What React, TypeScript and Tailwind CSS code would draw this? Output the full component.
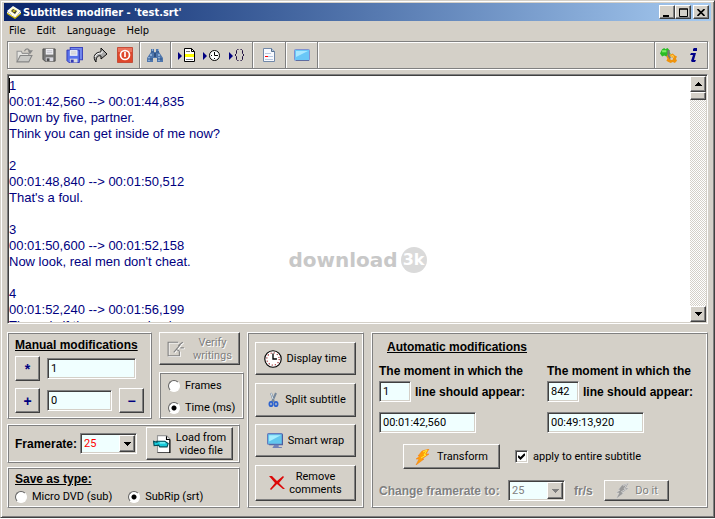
import type { ReactNode } from "react"
import clsx from "clsx"

const raised =
  "border border-t-white border-l-white border-r-[#404040] border-b-[#404040] bg-[#d4d0c8] shadow-[inset_-1px_-1px_#808080]"
const sunken =
  "border border-t-[#808080] border-l-[#808080] border-r-white border-b-white shadow-[inset_1px_1px_#404040,inset_-1px_-1px_#d4d0c8]"
const panel =
  "border border-t-white border-l-white border-r-[#808080] border-b-[#808080] shadow-[inset_1px_1px_#808080,inset_-1px_-1px_#fff]"
const uiFont = "font-['Roboto','Liberation_Sans',sans-serif] text-[11px] leading-[13px] whitespace-nowrap"
const boldFont = "font-['Liberation_Sans',sans-serif] text-[12px] leading-[14px] font-bold whitespace-nowrap"
const disabledText = "text-[#808080] [text-shadow:1px_1px_#fff]"

const subtitles = `1
00:01:42,560 --> 00:01:44,835
Down by five, partner.
Think you can get inside of me now?

2
00:01:48,840 --> 00:01:50,512
That's a foul.

3
00:01:50,600 --> 00:01:52,158
Now look, real men don't cheat.

4
00:01:52,240 --> 00:01:56,199
The only if they are coming in`

function Icon({ size = 16, children }: { size?: number; children: ReactNode }) {
  return (
    <svg width={size} height={size} viewBox="0 0 16 16" className="shrink-0" aria-hidden="true">
      {children}
    </svg>
  )
}

const AppIcon = () => (
  <Icon>
    <path d="M1 7 7 2l8 5-6 6z" fill="#fff" />
    <path d="m3 7 4-4 6 4-4 4z" fill="#fffbc0" />
    <path d="m5 7 2-2 4 2-2 3z" fill="#333" />
    <path d="m6 7 2-1 2 1-2 1z" fill="#e9da19" />
    <path d="m1 8 8 5 6-5v2l-6 5-8-5z" fill="#c8b400" />
    <path d="m1 8 8 5 6-5" fill="none" stroke="#fff" />
  </Icon>
)

const OpenIcon = () => (
  <Icon size={17}>
    <path d="M1 14V4h4l1 2h6v3" fill="#e5e5e2" stroke="#959595" />
    <path d="m1 14 3-6h11l-3 6z" fill="#c9c9c6" stroke="#858585" />
    <path d="M8 4c1-3 4-3 5 0" fill="none" stroke="#888" />
    <path d="M11 3h5l-3 4z" fill="#888" />
  </Icon>
)

const Disk = ({ body, edge }: { body: string; edge: string }) => (
  <>
    <path d="M1 1h13v13H3l-2-2z" fill={body} stroke={edge} />
    <path d="M4 1h8v6H4z" fill="#f4f4f8" />
    <path d="M5 3h6M5 5h6" stroke="#bcbcc4" />
    <path d="M4 10h8v4H4z" fill="#d9d9e0" />
    <path d="M5 11h3v3H5z" fill={edge} />
  </>
)

const SaveIcon = () => (
  <Icon size={15}>
    <Disk body="#777" edge="#4d4d4d" />
  </Icon>
)

const SaveAllIcon = () => (
  <Icon size={17}>
    <path d="M4 .5h11.5V12H4z" fill="#7288ed" stroke="#3d45bd" />
    <g transform="translate(0 2) scale(.9)">
      <Disk body="#5871ec" edge="#343ab5" />
    </g>
  </Icon>
)

const RedoIcon = () => (
  <Icon>
    <path d="M4 15C0 10 3 5 9 5V1l6 6-6 5V9C6 8 4 10 4 15z" fill="#a9a9a9" stroke="#111" />
    <path d="M3 10c1-3 3-4 7-4V4" fill="none" stroke="#fff" />
  </Icon>
)

const PowerIcon = () => (
  <Icon>
    <path d="M.5.5h15v15H.5z" fill="#df472c" stroke="#c54d39" />
    <path d="M1 1h14v4H1z" fill="#ed725b" />
    <circle cx="8" cy="8" r="4.500" fill="none" stroke="#fff" strokeWidth="1.700" />
    <path d="M8 5v5" stroke="#fff" strokeWidth="1.700" />
  </Icon>
)

const BinocularsIcon = () => (
  <Icon>
    <path d="M4 2h3v3h2V2h3v3l2 3 2 3v4h-6v-4H6v4H0v-4l2-3 2-3z" fill="#4f76ac" />
    <path d="M5 3h1M11 3h1M3 8h2M11 8h2M2 10v4M12 10v4" stroke="#c5e2ff" />
    <path d="M7 6h2v4H7z" fill="#30507f" />
    <path d="M4 5h3M9 5h3M1 12h5M10 12h5" stroke="#2d5288" />
  </Icon>
)

const Marker = () => <path d="m0 5 4 4-4 4z" fill="#000080" />

const LineIcon = () => (
  <svg width="18" height="16" viewBox="0 0 18 16" className="shrink-0" aria-hidden="true">
    <Marker />
    <path d="M6.500 1.500h7l3 3v10h-10z" fill="#fff" stroke="#000" />
    <path d="M13.500 1.500v3h3" stroke="#000" fill="none" />
    <path d="M8 4.500h4M8 12.500h7" stroke="#777" />
    <path d="M7 7h9v3H7z" fill="#ff0" />
  </svg>
)

const TimeIcon = () => (
  <svg width="18" height="16" viewBox="0 0 18 16" className="shrink-0" aria-hidden="true">
    <Marker />
    <circle cx="11.500" cy="8.500" r="5" fill="#fff" stroke="#000" />
    <path d="M11.500 5v3.500H15M8 8.500h1M11.500 11v1" stroke="#000" fill="none" />
  </svg>
)

const BracesIcon = () => (
  <svg width="16" height="16" viewBox="0 0 16 16" className="shrink-0" aria-hidden="true">
    <Marker />
    <path
      d="M9.500 2.500h-1l-1 1v3l-1.500 1.500 1.500 1.500v3l1 1h1M11.500 2.500h1l1 1v3l1.500 1.500-1.500 1.500v3l-1 1h-1"
      fill="none"
      stroke="#201040"
    />
  </svg>
)

const DocumentIcon = () => (
  <Icon>
    <path d="M2.500 1.500h8l3 3v10h-11z" fill="#f8faff" stroke="#7188a8" />
    <path d="M10.500 1.500v3h3" fill="#b7cbe5" stroke="#57718f" />
    <path d="M4 6.500h6M7 9.500h5M4 12.500h8" stroke="#b9c8e0" />
    <path d="M4 9h3v1H4z" fill="#f00" />
  </Icon>
)

const ScreenIcon = () => (
  <Icon>
    <rect x=".5" y="2.500" width="15" height="11" rx="1" fill="#69c7f7" stroke="#8290cf" />
    <path d="M2 4h12L2 10z" fill="#a9e8ff" />
    <path d="M2 13.500h13" stroke="#606da0" />
  </Icon>
)

const GearsIcon = () => (
  <Icon size={17}>
    <path d="m2 2 2-1 1 1 2-1 2 2v2l1 1-2 2-2 1-2-1-2 1-2-3 1-2z" fill="#29bc25" />
    <path d="M2 3h4v2H2z" fill="#79ee61" />
    <path d="m7 7 2-1 1 1 2-1 2 2 2 1-1 2 1 2-2 2-2-1-2 1-2-1-2-1 1-2-1-2z" fill="#ef930c" />
    <path d="m8 8 2 1 2-1 1 2" fill="none" stroke="#ffd153" />
    <path d="M8 3v5l2 3" fill="none" stroke="#777" strokeWidth="2" />
    <circle cx="11" cy="11" r="1.300" fill="#d4d0c8" />
  </Icon>
)

const InfoIcon = () => (
  <Icon>
    <path d="M8 1h3v3H7V2zM5 6h5l-2 7h2l-1 2H6l-1-1 2-6H4z" fill="#000088" />
  </Icon>
)

const VerifyIcon = () => (
  <Icon size={18}>
    <g transform="translate(.7 .7)" fill="none" stroke="#fff">
      <path d="M10 2H1v12h10v-4M6 11l6-7M8 8l3 2M10 5l4-3M12 7h3" />
    </g>
    <path d="M10 2H1v12h10v-4M6 11l6-7M8 8l3 2M10 5l4-3M12 7h3" fill="none" stroke="#808080" />
  </Icon>
)

const VideoIcon = () => (
  <Icon size={18}>
    <path d="M5 .5h7l3 3v12H4V.5z" fill="#fff" stroke="#999" />
    <path d="M12 1v3h3M15 4v12H4" fill="none" stroke="#000" />
    <path d="m.5 5.500 3 1V5.500h7l3 2-1 3H6l-1-1.500-4 .5z" fill="#16cada" stroke="#004b57" />
    <path d="M6 7h5" stroke="#a4ffff" />
  </Icon>
)

const ClockIcon = () => (
  <Icon size={18}>
    <circle cx="8" cy="8" r="7.300" fill="#fff" stroke="#000" />
    <circle cx="8" cy="8" r="5.500" fill="none" stroke="#a02020" strokeDasharray="1 1.880" />
    <path d="M8 3v5h3.500" fill="none" stroke="#000" strokeWidth="1.200" />
  </Icon>
)

const ScissorsIcon = () => (
  <Icon>
    <path d="m6 1 3 9M11 1 7 10" stroke="#75879b" strokeWidth="2" />
    <path d="m6 1 2 6" stroke="#d4e0ec" />
    <g fill="none" stroke="#2e63ce" strokeWidth="1.800">
      <ellipse cx="6" cy="12" rx="1.600" ry="2.200" />
      <ellipse cx="11" cy="12" rx="1.600" ry="2.200" />
    </g>
  </Icon>
)

const MonitorIcon = () => (
  <Icon size={17}>
    <rect x=".5" y="1.500" width="14" height="10" rx="1" fill="#62c6ed" stroke="#6679bb" />
    <path d="M2 3h11L2 9z" fill="#a5eeff" />
    <path d="M14.500 2v10H2" fill="none" stroke="#495b9d" />
    <path d="M7 12h4v2h3v1H5z" fill="#7181b7" />
  </Icon>
)

const CrossIcon = () => (
  <Icon>
    <path d="m0 1 3 0 5 5 6-5 1 1-5 6 6 6-2 0-6-5-6 6-1-1 5-6z" fill="#dc0808" />
  </Icon>
)

const BoltIcon = ({ gray = false }: { gray?: boolean }) => (
  <Icon>
    <path
      d="m7 2 7-2-3 5h3L7 10h2L1 16l3-6H1l4-3H3z"
      fill={gray ? "#999" : "#ff9e08"}
      stroke={gray ? "#ddd" : "#f47b0c"}
      strokeWidth=".5"
    />
    <path d="m8 3 4-2-3 5 2 0-5 3" fill="none" stroke={gray ? "#ccc" : "#ffed2f"} />
  </Icon>
)

function Arrow({ up = false, gray = false }: { up?: boolean; gray?: boolean }) {
  return (
    <svg width="7" height="4" viewBox="0 0 7 4" shapeRendering="crispEdges" aria-hidden="true">
      <path d={up ? "M3 0h1v1h1v1h1v1h1v1H0V3h1V2h1V1h1z" : "M0 0h7v1H6v1H5v1H4v1H3V3H2V2H1V1H0z"} fill={gray ? "#808080" : "#000"} />
    </svg>
  )
}

function ToolButton({ label, children }: { label: string; children: ReactNode }) {
  return (
    <button aria-label={label} title={label} className="flex h-6 w-[25px] items-center justify-center">
      {children}
    </button>
  )
}

function ToolGroup({ className, children }: { className?: string; children?: ReactNode }) {
  return (
    <div
      className={clsx(
        "flex items-center border-l border-[#808080] shadow-[inset_1px_0_#fff] first:border-l-0",
        className
      )}>
      {children}
    </div>
  )
}

function PushButton({ className, children, disabled }: { className: string; children: ReactNode; disabled?: boolean }) {
  return (
    <button disabled={disabled} className={clsx(raised, uiFont, "flex items-center justify-center", disabled && disabledText, className)}>
      {children}
    </button>
  )
}

function Field({ label, value, className }: { label: string; value: string; className: string }) {
  return (
    <input aria-label={label} defaultValue={value} className={clsx(sunken, uiFont, "h-[21px] min-w-0 bg-[#f0ffff] px-[3px] pb-px", className)} />
  )
}

function Radio({ name, label, checked }: { name: string; label: string; checked?: boolean }) {
  return (
    <label className={clsx(uiFont, "flex items-center gap-[5px]")}>
      <input
        type="radio"
        name={name}
        defaultChecked={checked}
        className="size-3 shrink-0 appearance-none rounded-full border border-t-[#606060] border-l-[#606060] border-r-white border-b-white bg-white checked:bg-[radial-gradient(circle,#000_2px,#fff_3px)]"
      />
      {label}
    </label>
  )
}

function RateSelect({ label, disabled, className }: { label: string; disabled?: boolean; className: string }) {
  return (
    <div className="relative">
      <select
        aria-label={label}
        disabled={disabled}
        className={clsx(sunken, uiFont, "block h-[21px] appearance-none bg-[#f0ffff] pl-[3px] opacity-100", className)}>
        <option>25</option>
      </select>
      <span className={clsx(raised, "pointer-events-none absolute inset-y-[2px] right-[2px] flex w-4 items-center justify-center")}>
        <Arrow gray={disabled} />
      </span>
    </div>
  )
}

function TitleBar() {
  const control = clsx(raised, "flex h-[14px] w-4 items-center justify-center")
  return (
    <header className="flex h-[18px] items-center bg-linear-to-r from-[#0a246a] to-[#a6caf0] pr-[2px] pl-[2px]">
      <AppIcon />
      <h1 className="ml-px flex-1 pt-px font-['DejaVu_Sans_Condensed','DejaVu_Sans',sans-serif] text-[11px] leading-[14px] font-bold text-white">
        Subtitles modifier - 'test.srt'
      </h1>
      <button aria-label="Minimize" className={control}>
        <svg width="10" height="9"><path d="M1 7h6v2H1z" /></svg>
      </button>
      <button aria-label="Maximize" className={control}>
        <svg width="9" height="9"><path d="M.5 1h8v7.500h-8zM0 1h9" fill="none" stroke="#000" /></svg>
      </button>
      <button aria-label="Close" className={clsx(control, "ml-[2px]")}>
        <svg width="8" height="7"><path d="m.5 0 7 7m0-7-7 7" stroke="#000" strokeWidth="1.600" /></svg>
      </button>
    </header>
  )
}

function Toolbar() {
  return (
    <div className="mx-[3px] flex h-7 border border-[#808080] shadow-[inset_1px_1px_#fff,1px_1px_#fff]">
      <ToolGroup className="w-[131px] pl-1">
        <ToolButton label="Open"><OpenIcon /></ToolButton>
        <ToolButton label="Save"><SaveIcon /></ToolButton>
        <ToolButton label="Save all"><SaveAllIcon /></ToolButton>
        <ToolButton label="Reload"><RedoIcon /></ToolButton>
        <ToolButton label="Exit"><PowerIcon /></ToolButton>
      </ToolGroup>
      <ToolGroup className="w-[31px] justify-center">
        <ToolButton label="Find"><BinocularsIcon /></ToolButton>
      </ToolGroup>
      <ToolGroup className="w-[82px] justify-center">
        <ToolButton label="Go to line"><LineIcon /></ToolButton>
        <ToolButton label="Go to time"><TimeIcon /></ToolButton>
        <ToolButton label="Go to braces"><BracesIcon /></ToolButton>
      </ToolGroup>
      <ToolGroup className="w-[33px] justify-center">
        <ToolButton label="Notes"><DocumentIcon /></ToolButton>
      </ToolGroup>
      <ToolGroup className="w-8 justify-center">
        <ToolButton label="Preview"><ScreenIcon /></ToolButton>
      </ToolGroup>
      <ToolGroup className="flex-1" />
      <ToolGroup className="w-[53px] justify-center">
        <ToolButton label="Settings"><GearsIcon /></ToolButton>
        <ToolButton label="About"><InfoIcon /></ToolButton>
      </ToolGroup>
    </div>
  )
}

function Editor() {
  return (
    <div className={clsx(sunken, "relative mx-[3px] mt-[5px] flex h-[250px] bg-white p-px")}>
      <textarea
        aria-label="Subtitles"
        defaultValue={subtitles}
        className="flex-1 resize-none overflow-hidden pt-[2px] font-['Liberation_Sans',sans-serif] text-[13px] leading-4 text-[#000080]"
      />
      <div className="flex w-4 flex-col bg-[repeating-conic-gradient(#fff_0_25%,#d4d0c8_0_50%)] bg-[length:2px_2px]">
        <button aria-label="Scroll up" className={clsx(raised, "flex h-4 items-center justify-center")}><Arrow up /></button>
        <div className={clsx(raised, "h-2")} />
        <button aria-label="Scroll down" className={clsx(raised, "mt-auto flex h-4 items-center justify-center")}><Arrow /></button>
      </div>
      <span className="absolute top-[3px] left-px h-[15px] w-px bg-black" />
      <div className="pointer-events-none absolute inset-x-0 top-[172px] flex items-center justify-center gap-[3px]">
        <span className="font-['DejaVu_Sans',sans-serif] text-[20px] leading-6 font-bold text-[#c8c8c8]">download</span>
        <span className="flex size-[26px] items-center justify-center rounded-full bg-[#dadada] font-['DejaVu_Sans',sans-serif] text-[16px] leading-5 font-bold text-white">
          3k
        </span>
      </div>
    </div>
  )
}

function ManualPanel() {
  const key = clsx(raised, "size-[25px] font-['Liberation_Sans',sans-serif] text-[14px] leading-4 font-bold text-[#000080]")
  return (
    <section className={clsx(panel, "w-[145px] px-[7px] pt-[5px] pb-[5px]")}>
      <h2 className={clsx(boldFont, "underline")}>Manual modifications</h2>
      <div className="mt-1 flex items-center gap-[7px]">
        <button aria-label="Multiply" className={key}>*</button>
        <Field label="Multiply by" value="1" className="w-[89px]" />
      </div>
      <div className="mt-[7px] flex items-center gap-[7px]">
        <button aria-label="Add" className={key}>+</button>
        <Field label="Add or subtract" value="0" className="w-[65px]" />
        <button aria-label="Subtract" className={key}>−</button>
      </div>
    </section>
  )
}

function LeftColumn() {
  return (
    <div className="flex w-[233px] flex-col">
      <div className="flex justify-between">
        <ManualPanel />
        <div className="flex w-[81px] flex-col gap-[7px]">
          <PushButton disabled className="h-[33px] gap-[8px]">
            <VerifyIcon />
            <span>Verify<br />writings</span>
          </PushButton>
          <fieldset className={clsx(panel, "flex flex-1 flex-col justify-between px-2 pt-[6px] pb-1")}>
            <Radio name="unit" label="Frames" />
            <Radio name="unit" label="Time (ms)" checked />
          </fieldset>
        </div>
      </div>
      <section className={clsx(panel, "mt-[5px] flex h-[39px] items-center pr-[6px] pl-[7px]")}>
        <span className={clsx(boldFont, "flex-1")}>Framerate:</span>
        <RateSelect label="Framerate" className="w-[57px] text-[#ff0000]" />
        <PushButton className="ml-[9px] h-[33px] w-[87px] gap-[5px]">
          <VideoIcon />
          <span>Load from<br />video file</span>
        </PushButton>
      </section>
      <fieldset className={clsx(panel, "mt-1 h-[41px] px-[7px] pt-1")}>
        <div className={clsx(boldFont, "underline")}>Save as type:</div>
        <div className="mt-1 flex gap-4">
          <Radio name="type" label="Micro DVD (sub)" />
          <Radio name="type" label="SubRip (srt)" checked />
        </div>
      </fieldset>
    </div>
  )
}

function ActionsPanel() {
  return (
    <section className={clsx(panel, "flex w-[117px] flex-col justify-between px-[7px] pt-[9px] pb-[6px]")}>
      <PushButton className="h-[33px] gap-1"><ClockIcon />Display time</PushButton>
      <PushButton className="h-[34px] gap-1"><ScissorsIcon />Split subtitle</PushButton>
      <PushButton className="h-[33px] gap-1"><MonitorIcon />Smart wrap</PushButton>
      <PushButton className="h-9 gap-1"><CrossIcon /><span>Remove<br />comments</span></PushButton>
    </section>
  )
}

function Moment({ line, time, name }: { line: string; time: string; name: string }) {
  return (
    <div className="w-[150px]">
      <p className={boldFont}>The moment in which the</p>
      <div className="mt-[3px] flex items-center gap-1">
        <Field label={`${name} line`} value={line} className="w-8" />
        <span className={boldFont}>line should appear:</span>
      </div>
      <Field label={`${name} time`} value={time} className="mt-[10px] block w-[97px]" />
    </div>
  )
}

function AutomaticPanel() {
  return (
    <section className={clsx(panel, "flex-1 pt-[7px] pl-[7px]")}>
      <h2 className={clsx(boldFont, "ml-2 underline")}>Automatic modifications</h2>
      <div className="mt-[10px] flex gap-[18px]">
        <Moment name="First" line="1" time="00:01:42,560" />
        <Moment name="Last" line="842" time="00:49:13,920" />
      </div>
      <div className="mt-[11px] ml-6 flex items-center">
        <PushButton className="h-[25px] w-[97px] gap-[6px]"><BoltIcon />Transform</PushButton>
        <label className={clsx(uiFont, "ml-[15px] flex items-center gap-[5px]")}>
          <span className="grid place-items-center">
            <input type="checkbox" defaultChecked className={clsx(sunken, "col-start-1 row-start-1 size-[13px] appearance-none bg-white")} />
            <svg width="7" height="7" className="pointer-events-none col-start-1 row-start-1"><path d="m0 3 2.500 2.500L7 1" fill="none" stroke="#000" strokeWidth="2" /></svg>
          </span>
          apply to entire subtitle
        </label>
      </div>
      <div className="mt-[11px] flex items-center">
        <span className={clsx(boldFont, disabledText, "w-[129px]")}>Change framerate to:</span>
        <RateSelect label="New framerate" disabled className="w-[57px] text-[#808080]" />
        <span className={clsx(boldFont, disabledText, "ml-[9px] w-[30px]")}>fr/s</span>
        <PushButton disabled className="h-[21px] w-[65px] gap-1"><BoltIcon gray />Do it</PushButton>
      </div>
    </section>
  )
}

export default function App() {
  return (
    <main className="border border-t-[#d4d0c8] border-r-[#404040] border-b-[#404040] border-l-[#d4d0c8] bg-[#d4d0c8] px-[3px] pt-[2px] pb-[9px] text-black shadow-[inset_1px_1px_#fff,inset_-1px_-1px_#808080]">
      <TitleBar />
      <nav className="flex h-5 items-center gap-[11px] pl-[5px] font-['DejaVu_Sans_Condensed','DejaVu_Sans',sans-serif] text-[11px] leading-[14px]">
        <button>File</button>
        <button>Edit</button>
        <button>Language</button>
        <button>Help</button>
      </nav>
      <Toolbar />
      <Editor />
      <div className="mx-[3px] mt-2 flex gap-[7px]">
        <LeftColumn />
        <ActionsPanel />
        <AutomaticPanel />
      </div>
    </main>
  )
}
